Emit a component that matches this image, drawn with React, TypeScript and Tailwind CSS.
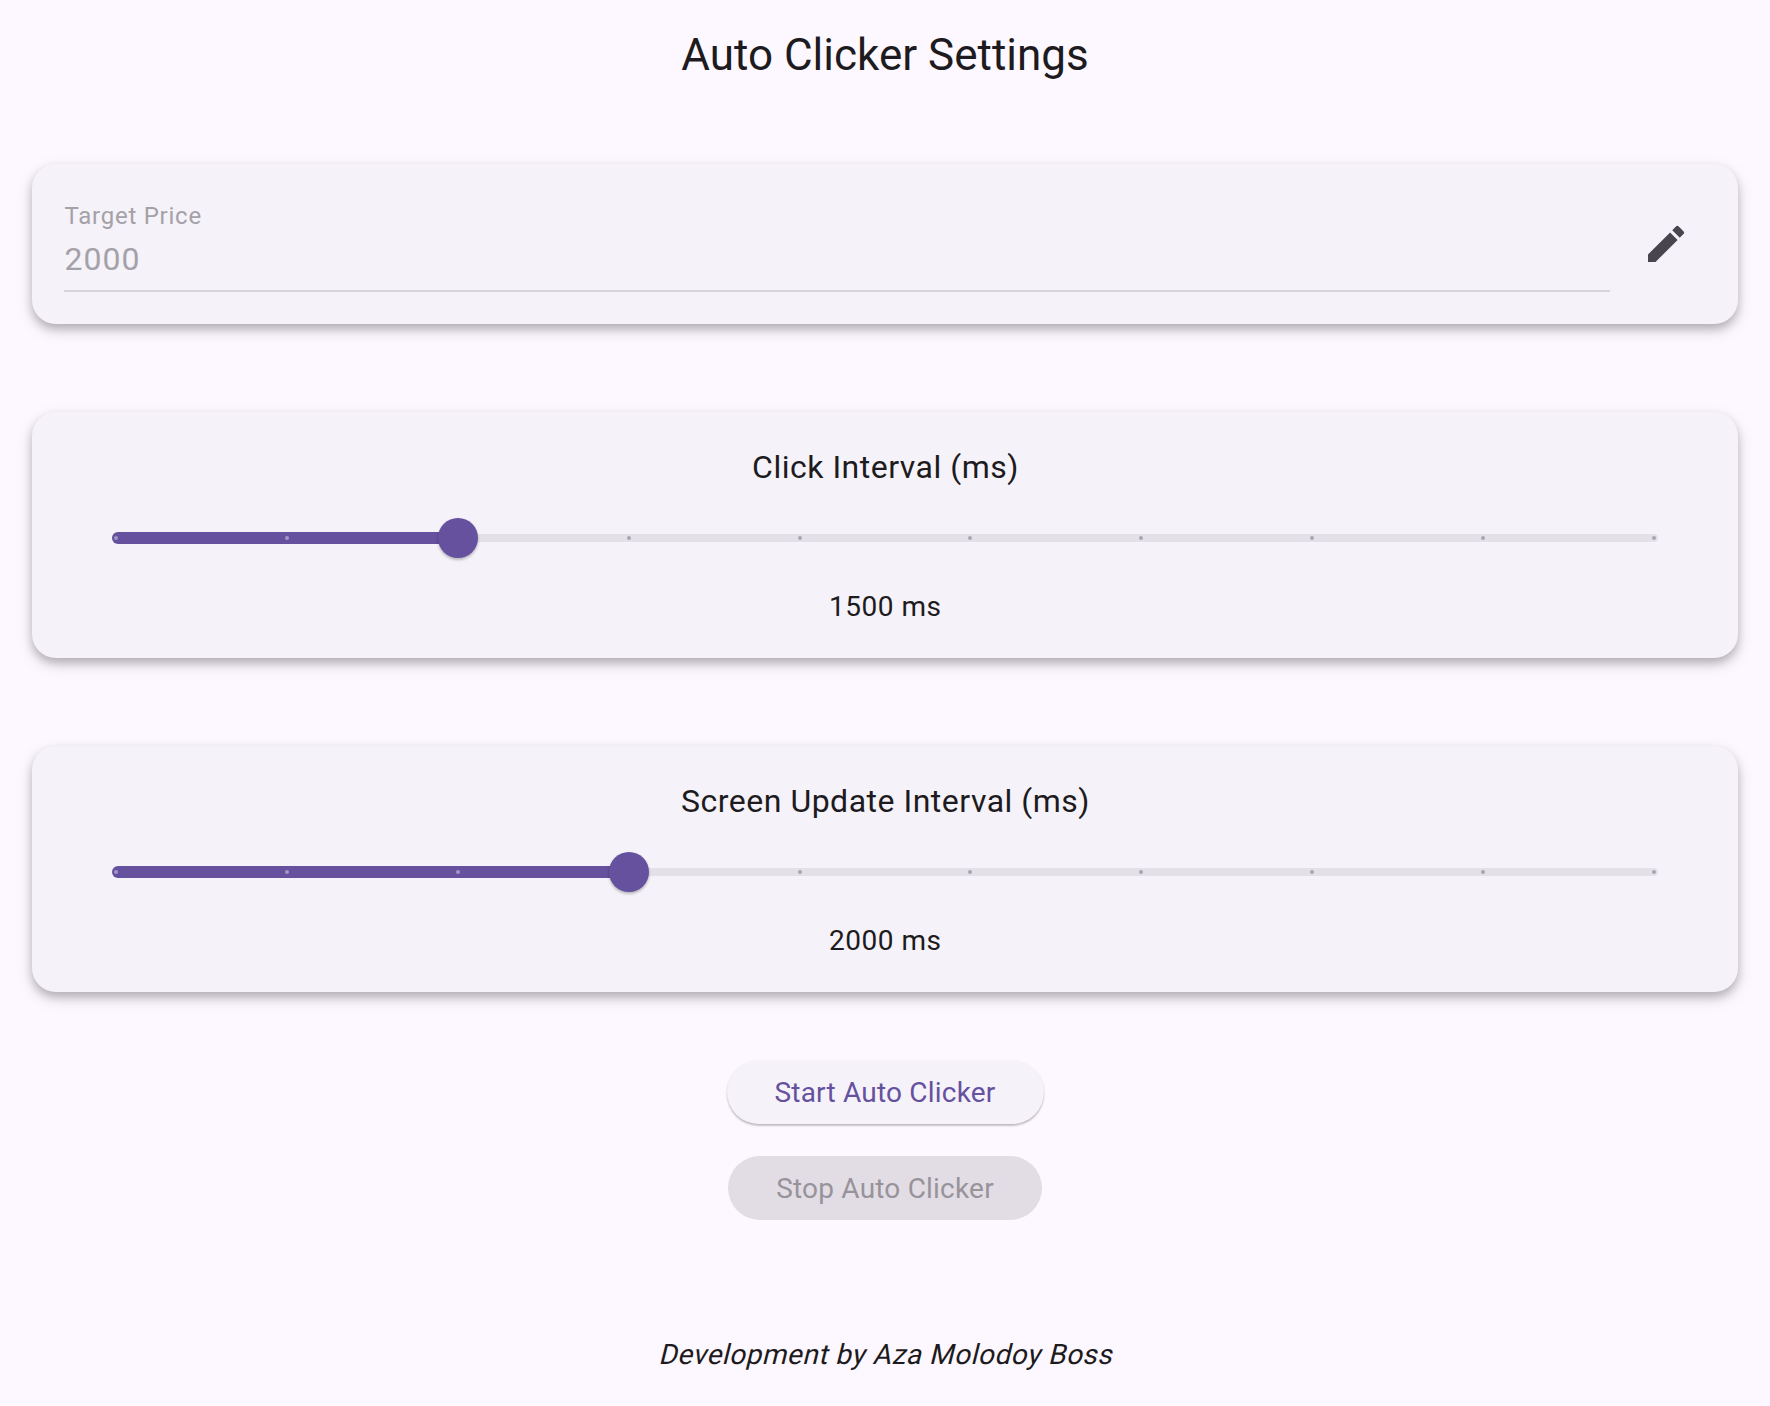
import React from "react";
import { MdEdit } from "react-icons/md";

const card =
  "w-full rounded-[24px] bg-[#f5f2f9] shadow-[0_5px_8px_rgba(0,0,0,0.19),0_6px_16px_rgba(0,0,0,0.15)]";

const STEPS = 9;

function Slider({ step }: { step: number }) {
  const ticks = Array.from({ length: STEPS + 1 }, (_, i) => i);
  return (
    <div className="relative mx-[48px] h-[96px] shrink-0">
      <div className="absolute inset-x-0 top-[44px] h-[8px] rounded-full bg-[#e4e0e8]" />
      <div className="absolute inset-x-[4px] inset-y-0">
        <div
          className="absolute -left-[4px] top-[42px] h-[12px] rounded-l-full bg-[#65519e]"
          style={{ width: `calc(${(step / STEPS) * 100}% + 4px)` }}
        />
        {ticks.map((i) => (
          <span
            key={i}
            className={
              "absolute top-[46px] -ml-[2px] size-[4px] rounded-full " +
              (i < step ? "bg-[#a297c4]" : "bg-[#aaa6af]")
            }
            style={{ left: `${(i / STEPS) * 100}%` }}
          />
        ))}
        <div
          className="absolute top-[28px] -ml-[20px] size-[40px] rounded-full bg-[#65519e] shadow-[0_2px_3px_rgba(0,0,0,0.2),0_1px_3px_rgba(0,0,0,0.08)]"
          style={{ left: `${(step / STEPS) * 100}%` }}
        />
      </div>
    </div>
  );
}

function IntervalCard({ title, value, step }: { title: string; value: string; step: number }) {
  return (
    <section className={card + " flex h-[246px] flex-col p-[32px]"}>
      <h2 className="h-[46px] shrink-0 pl-[1px] text-center text-[32px] leading-[46px] tracking-[0.5px]">{title}</h2>
      <Slider step={step} />
      <p className="shrink-0 pl-[0.5px] text-center text-[28px] leading-[42px] tracking-[0.5px]">{value}</p>
    </section>
  );
}

export default function App() {
  return (
    <div className="flex h-[1406px] w-[1770px] flex-col overflow-hidden bg-[#fdf8ff] font-[Roboto,sans-serif] text-[#1d1b20]">
      <header className="h-[110px] text-center text-[44px] leading-[110px]">Auto Clicker Settings</header>
      <main className="flex flex-col items-center px-[32px] pt-[54px]">
        <section className={card + " flex h-[160px] items-center justify-between p-[32px]"}>
          <div className="flex h-[96px] w-[1546px] flex-col border-b-2 border-[#d9d5dd] text-[#a4a1a8]">
            <label className="mt-[4px] pl-[0.5px] text-[24px] leading-[32px] tracking-[0.75px]">Target Price</label>
            <span className="mt-[3px] pl-[0.5px] text-[32px] leading-[48px] tracking-[1px]">2000</span>
          </div>
          <button className="mr-[16px]" aria-label="Edit">
            <MdEdit className="size-[48px] text-[#49454e]" />
          </button>
        </section>
        <div className="mt-[88px] flex w-full flex-col gap-[88px]">
          <IntervalCard title="Click Interval (ms)" value="1500 ms" step={2} />
          <IntervalCard title="Screen Update Interval (ms)" value="2000 ms" step={3} />
        </div>
        <button className="mt-[68px] h-[64px] rounded-full bg-[#f5f2f9] px-[48px] pt-[2px] text-[28px] tracking-[0.2px] text-[#65519e] shadow-[0_2px_2px_rgba(0,0,0,0.2),0_1px_2px_rgba(0,0,0,0.08)]">
          Start Auto Clicker
        </button>
        <button className="mt-[32px] h-[64px] rounded-full bg-[#e2dde4] px-[48px] pt-[2px] text-[28px] tracking-[0.2px] text-[#98939b]">
          Stop Auto Clicker
        </button>
      </main>
      <footer className="mt-[115px] flex justify-center text-[28px] leading-[40px] tracking-[0.5px]">
        <span className="origin-[50%_30px] -skew-x-[14deg]">Development by Aza Molodoy Boss</span>
      </footer>
    </div>
  );
}
